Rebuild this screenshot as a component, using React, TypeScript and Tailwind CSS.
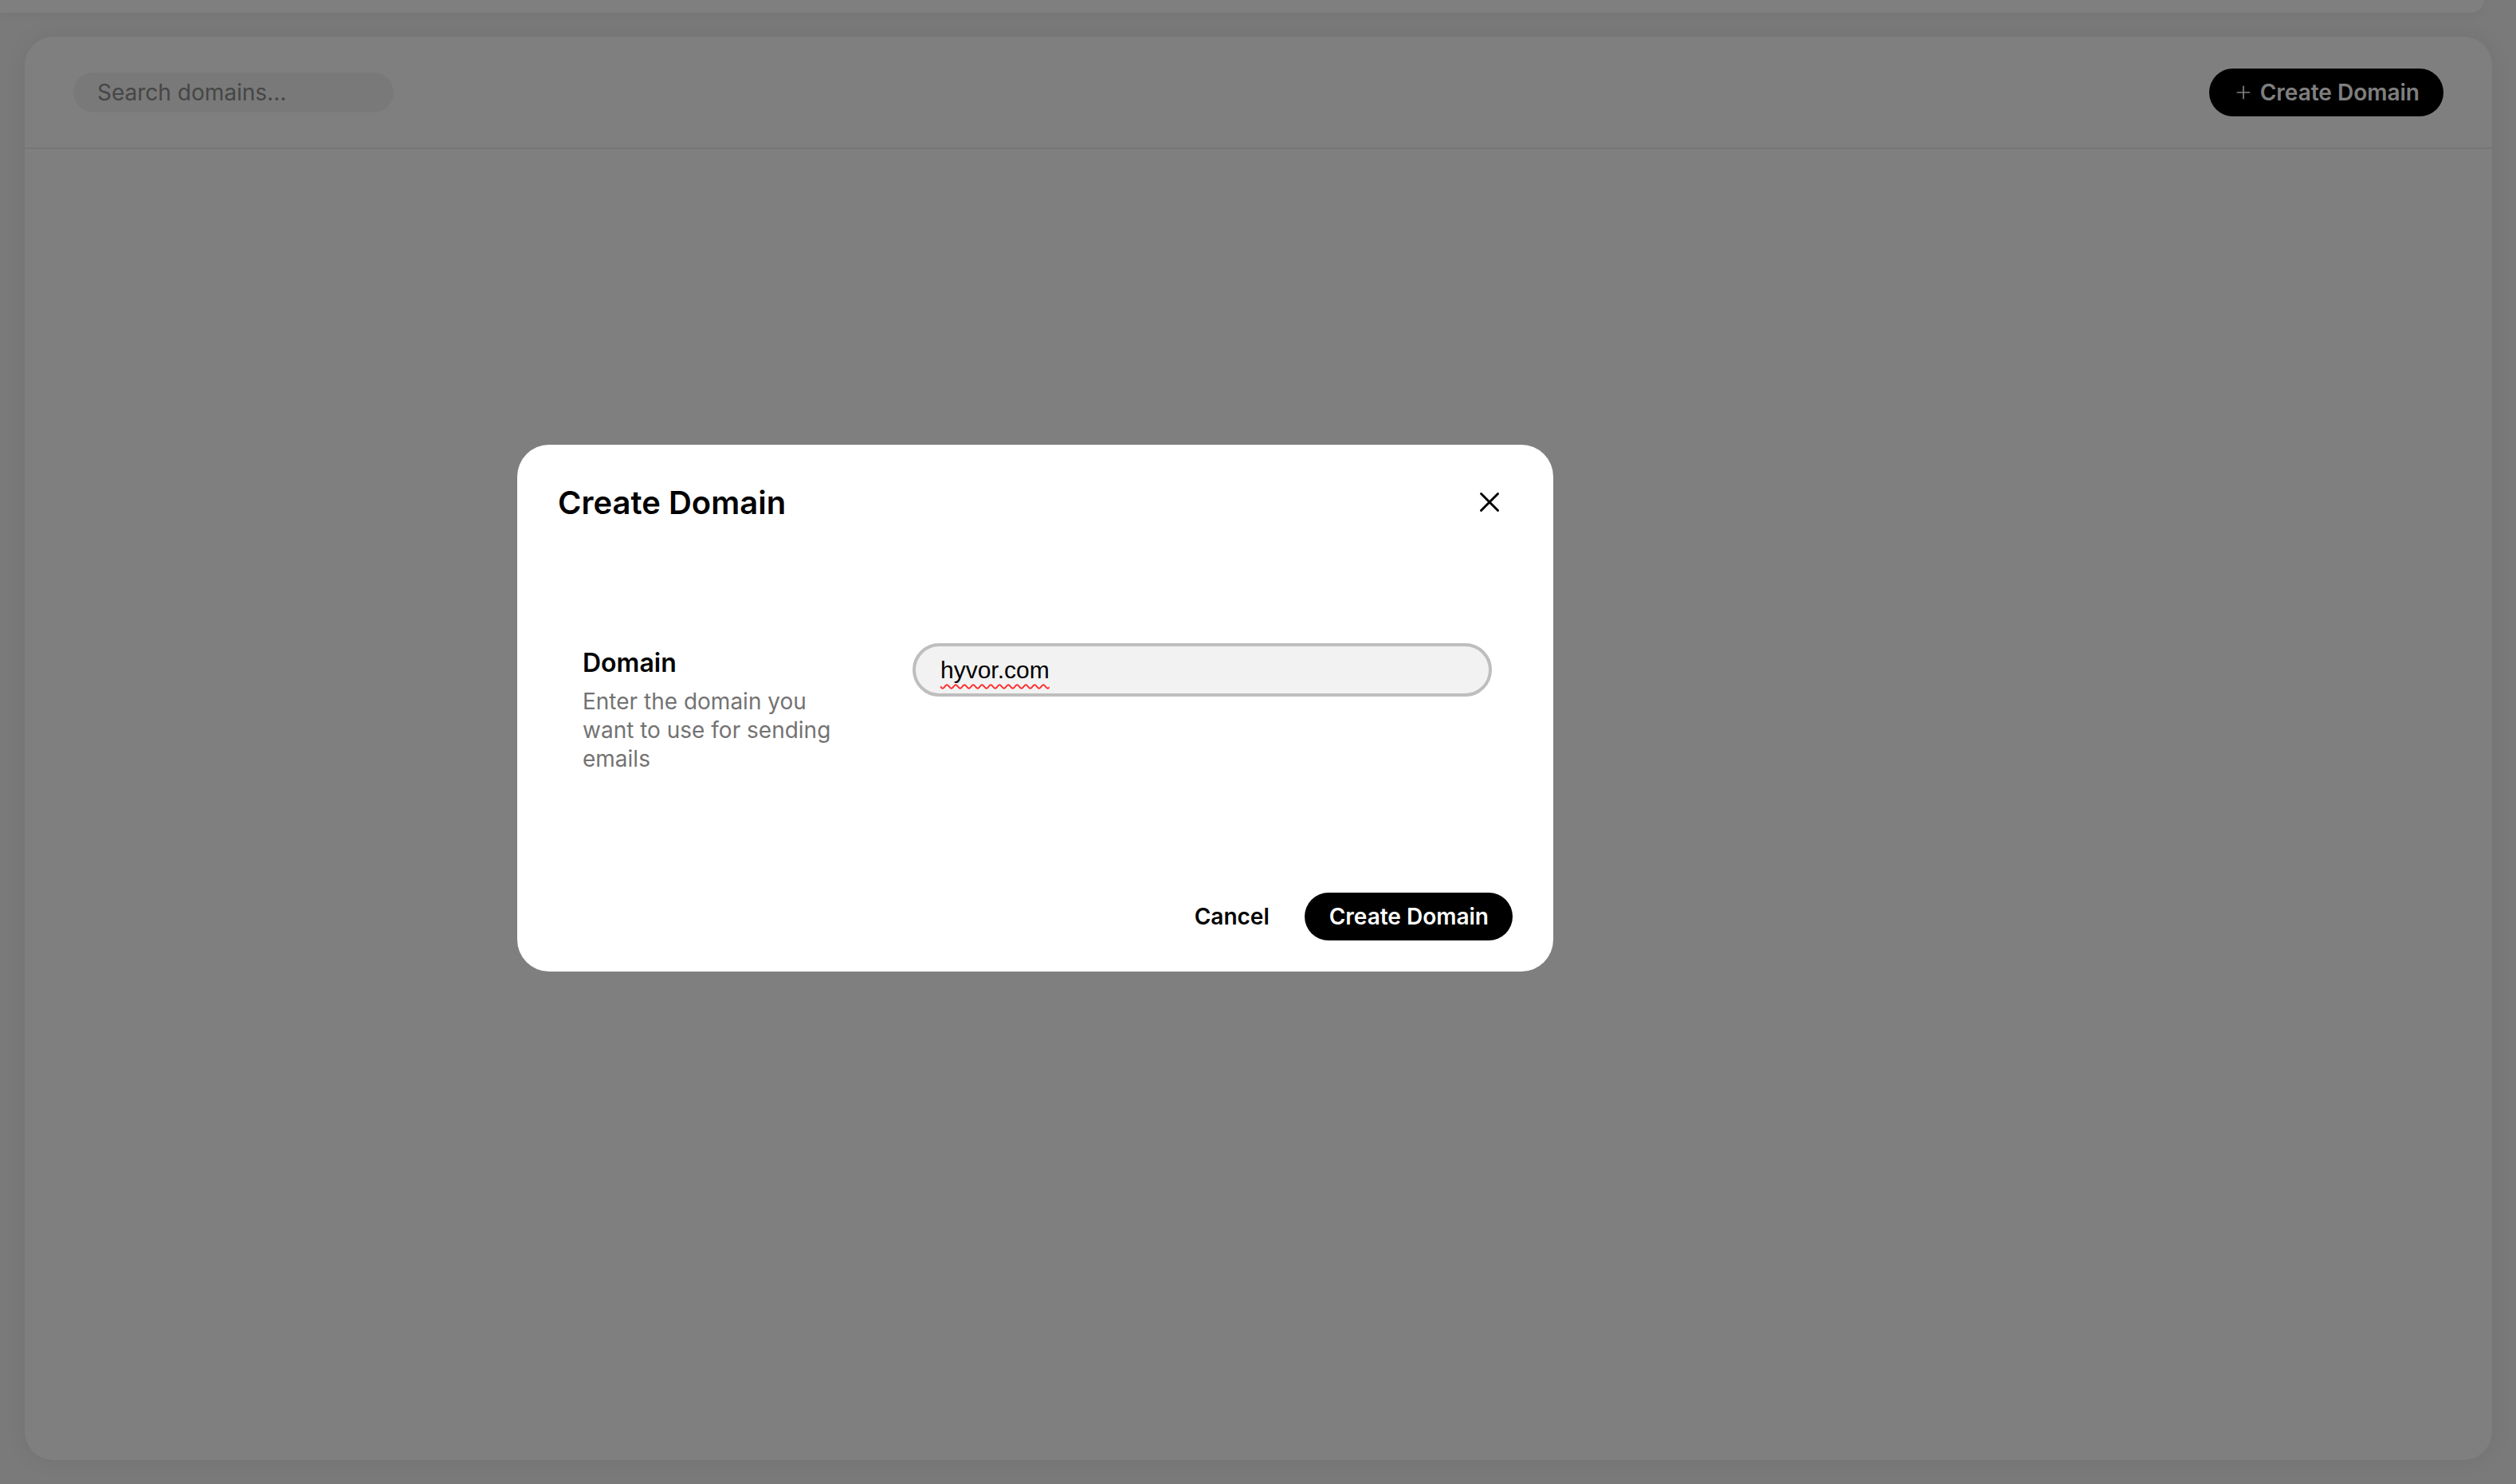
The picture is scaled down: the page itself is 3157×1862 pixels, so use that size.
import React, { useState } from 'react';
import { Plus, X } from 'lucide-react';

const sans = "font-['Inter','Noto_Sans',sans-serif]";

const DomainsPage: React.FC = () => {
  return (
    <div className={`${sans} min-h-screen bg-[#f4f4f4] pb-[30px]`}>
      {/* bottom of the nav card above, scrolled off */}
      <div className="h-[16px] w-[3117px] rounded-br-[36px] bg-white shadow-[0_2px_14px_rgba(0,0,0,0.05)]" />

      <div className="ml-[31px] mr-[30px] mt-[30px] h-[1786px] rounded-[36px] bg-white shadow-[0_0_28px_rgba(0,0,0,0.07)]">
        <div className="flex h-[141px] items-center justify-between border-b-2 border-[#ececec] px-[61px]">
          <input
            placeholder="Search domains..."
            className={`${sans} h-[50px] w-[402px] rounded-full bg-[#f2f2f2] pl-[30px] text-[28px] text-black outline-none placeholder:text-[#8c8c8c]`}
          />
          <button className="flex h-[60px] items-center gap-[8px] rounded-full bg-black pl-[30px] pr-[30px] text-[28px] font-semibold text-white">
            <Plus size={26} strokeWidth={1.6} />
            Create Domain
          </button>
        </div>
      </div>
    </div>
  );
};

const CreateDomainModal: React.FC<{ onClose: () => void }> = ({ onClose }) => {
  const [domain] = useState('hyvor.com');

  return (
    <div className="fixed inset-0 flex items-start bg-black/50 pl-[649px] pt-[558px]">
      <div className={`${sans} w-[1300px] rounded-[40px] bg-white px-[51px] pb-[39px] pt-[49px]`}>
        <div className="flex h-[48px] items-center justify-between">
          <h2 className="text-[40px] font-semibold leading-[48px] text-black">Create Domain</h2>
          <button onClick={onClose} className="flex h-[48px] w-[58px] items-center justify-center pb-[2px] text-black">
            <X size={42} strokeWidth={1.7} />
          </button>
        </div>

        <div className="flex items-start pl-[31px] pr-[26px] pt-[152px]">
          <div className="w-[335px] pt-[5px]">
            <div className="text-[32px] font-semibold leading-[40px] text-black">Domain</div>
            <div className="mt-[10px] text-[28px] leading-[36px] text-[#737373]">
              Enter the domain you want to use for sending emails
            </div>
          </div>
          <div className="ml-auto w-[727px]">
            <div className="flex h-[67px] items-center rounded-full border-[4px] border-[#bebebe] bg-[#f2f2f2] pl-[31px] font-['Liberation_Sans','Inter',sans-serif] text-[30px] text-black">
              <span className="underline decoration-[#ff2a2a] decoration-wavy decoration-[2px] underline-offset-[7px]">
                {domain}
              </span>
            </div>
          </div>
        </div>

        <div className="mt-[150px] flex items-center justify-end">
          <button onClick={onClose} className="h-[60px] px-[28px] text-[28px] font-semibold text-black">
            Cancel
          </button>
          <button className="ml-[16px] h-[60px] rounded-full bg-black pl-[31px] pr-[30px] text-[28px] font-semibold text-white">
            Create Domain
          </button>
        </div>
      </div>
    </div>
  );
};

const App: React.FC = () => {
  const [open, setOpen] = useState(true);
  return (
    <>
      <DomainsPage />
      {open && <CreateDomainModal onClose={() => setOpen(false)} />}
    </>
  );
};

export default App;
